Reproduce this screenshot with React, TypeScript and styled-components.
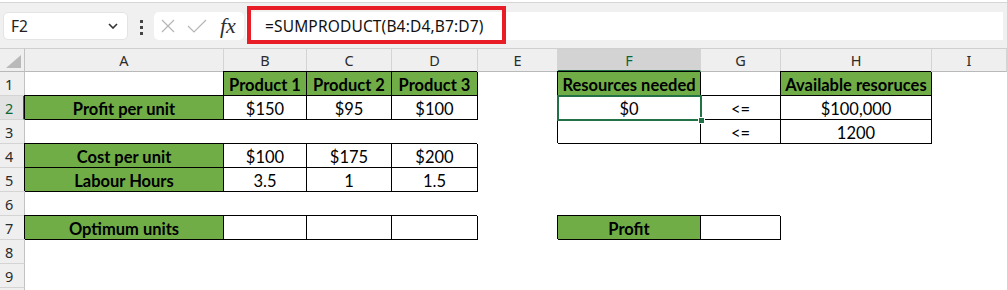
import React from 'react';
import styled, { createGlobalStyle, css } from 'styled-components';

const GlobalStyle = createGlobalStyle`
  html, body {
    margin: 0;
    padding: 0;
    background: #ffffff;
  }
  body {
    width: 1007px;
    height: 290px;
    overflow: hidden;
  }
`;

const UI_FONT = `"Noto Sans", "Open Sans", sans-serif`;
const CELL_FONT = `Lato, "Noto Sans", sans-serif`;
const GREEN_FILL = '#70ad47';
const EXCEL_GREEN = '#217346';

/**
 * Formula bar
 */
const TopStrip = styled.div`
  height: 2px;
  background: #ffffff;
  border-bottom: 1px solid #d6d6d6;
`;

const Toolbar = styled.div`
  position: relative;
  display: flex;
  align-items: flex-start;
  height: 45px;
  padding: 9px 4px 0 3px;
  box-sizing: border-box;
  background: #f0f0f0;
`;

const NameBox = styled.div`
  display: flex;
  align-items: center;
  justify-content: space-between;
  width: 125px;
  height: 28px;
  padding: 0 9px 0 7px;
  box-sizing: border-box;
  background: #ffffff;
  border: 1px solid #e4e4e4;
  border-radius: 5px;
  font-family: ${UI_FONT};
  font-size: 15.5px;
  color: #222;
`;

const Dots = styled.div`
  display: flex;
  flex-direction: column;
  gap: 3px;
  margin: 8px 11px 0 12px;

  span {
    width: 3px;
    height: 3px;
    background: #444;
  }
`;

const FxBox = styled.div`
  display: flex;
  align-items: center;
  gap: 12px;
  width: 90px;
  height: 28px;
  padding: 0 0 0 7px;
  box-sizing: border-box;
  background: #ffffff;
  border-radius: 5px;
`;

const FxLabel = styled.span`
  margin-left: 1px;
  font-family: "Liberation Serif", serif;
  font-style: italic;
  font-size: 22px;
  line-height: 1;
  color: #2e2e2e;
`;

const FormulaInput = styled.div`
  display: flex;
  align-items: center;
  flex: 1;
  height: 28px;
  margin-left: 2px;
  padding-left: 19px;
  background: #ffffff;
  border-radius: 4px 0 0 4px;
  font-family: ${UI_FONT};
  font-size: 15.5px;
  letter-spacing: 0.15px;
  color: #111;
`;

const Highlight = styled.div`
  position: absolute;
  left: 247px;
  top: 3px;
  width: 259px;
  height: 38px;
  border: 4px solid #e81d25;
  box-sizing: border-box;
  pointer-events: none;
`;

/**
 * Worksheet grid
 */
const Sheet = styled.div`
  display: grid;
  grid-template-columns: 25px 199px 83px 85px 86px 80px 143px 80px 151px 1fr;
  grid-auto-rows: 24px;
`;

const Corner = styled.div`
  position: relative;
  background: #efefef;
  border-top: 1px solid #cfcfcf;
  border-right: 1px solid #c2c2c2;
  border-bottom: 1px solid #b9b9b9;
  box-sizing: border-box;

  &::after {
    content: '';
    position: absolute;
    right: 3px;
    bottom: 3px;
    width: 0;
    height: 0;
    border-left: 15px solid transparent;
    border-bottom: 13px solid #b9b9b9;
  }
`;

const ColHeader = styled.div<{ $active?: boolean }>`
  display: flex;
  align-items: center;
  justify-content: center;
  background: ${(p) => (p.$active ? '#d3d3d3' : '#efefef')};
  border-top: 1px solid #cfcfcf;
  border-right: 1px solid #d4d4d4;
  border-bottom: ${(p) => (p.$active ? `2px solid ${EXCEL_GREEN}` : '1px solid #b9b9b9')};
  box-sizing: border-box;
  font-family: ${UI_FONT};
  font-size: 14.5px;
  color: ${(p) => (p.$active ? '#0e6537' : '#2b2b2b')};
`;

const RowHeader = styled.div<{ $active?: boolean }>`
  display: flex;
  align-items: center;
  padding-left: 5px;
  background: ${(p) => (p.$active ? '#e2e2e2' : '#efefef')};
  border-right: ${(p) => (p.$active ? `2px solid ${EXCEL_GREEN}` : '1px solid #c2c2c2')};
  border-bottom: 1px solid #d4d4d4;
  box-sizing: border-box;
  font-family: ${UI_FONT};
  font-size: 14.5px;
  color: ${(p) => (p.$active ? '#0e6537' : '#2b2b2b')};
`;

const Cell = styled.div<{ $fill?: boolean; $boxed?: boolean; $bold?: boolean; $selected?: boolean }>`
  display: flex;
  align-items: flex-end;
  justify-content: center;
  box-sizing: border-box;
  border-right: 1px solid transparent;
  border-bottom: 1px solid transparent;
  font-family: ${CELL_FONT};
  font-size: 16.5px;
  font-weight: ${(p) => (p.$bold ? 700 : 400)};
  line-height: 20px;
  color: #000;
  white-space: nowrap;
  background: ${(p) => (p.$fill ? GREEN_FILL : 'transparent')};

  ${(p) =>
    p.$boxed &&
    css`
      border-right-color: #000;
      border-bottom-color: #000;
      box-shadow: -1px -1px 0 #000;
    `}

  ${(p) =>
    p.$selected &&
    css`
      position: relative;

      &::after {
        content: '';
        position: absolute;
        left: -1px;
        top: -1px;
        right: -2px;
        bottom: -2px;
        border: 2px solid ${EXCEL_GREEN};
      }

      &::before {
        content: '';
        position: absolute;
        right: -5px;
        bottom: -5px;
        width: 5px;
        height: 5px;
        background: ${EXCEL_GREEN};
        border: 1px solid #fff;
        z-index: 1;
      }
    `}
`;

type CellSpec = {
  text?: string;
  fill?: boolean;
  boxed?: boolean;
  bold?: boolean;
  selected?: boolean;
};

const COLUMNS = ['A', 'B', 'C', 'D', 'E', 'F', 'G', 'H', 'I'];

const label = (text: string): CellSpec => ({ text, fill: true, boxed: true, bold: true });
const box = (text = ''): CellSpec => ({ text, boxed: true });
const blank: CellSpec = {};
const empty = (): CellSpec[] => COLUMNS.map(() => blank);

const ROWS: CellSpec[][] = [
  [blank, label('Product 1'), label('Product 2'), label('Product 3'), blank, label('Resources needed'), blank, label('Available resoruces'), blank],
  [label('Profit per unit'), box('$150'), box('$95'), box('$100'), blank, { text: '$0', boxed: true, selected: true }, box('<='), box('$100,000'), blank],
  [blank, blank, blank, blank, blank, box(), box('<='), box('1200'), blank],
  [label('Cost per unit'), box('$100'), box('$175'), box('$200'), blank, blank, blank, blank, blank],
  [label('Labour Hours'), box('3.5'), box('1'), box('1.5'), blank, blank, blank, blank, blank],
  empty(),
  [label('Optimum units'), box(), box(), box(), blank, label('Profit'), box(), blank, blank],
  empty(),
  empty(),
];

const App: React.FC = () => {
  return (
    <>
      <GlobalStyle />
      <TopStrip />
      <Toolbar>
        <NameBox>
          <span>F2</span>
          <svg width="10" height="6" viewBox="0 0 10 6">
            <path d="M1 1 L5 5 L9 1" fill="none" stroke="#333" strokeWidth="1.6" />
          </svg>
        </NameBox>
        <Dots>
          <span />
          <span />
          <span />
        </Dots>
        <FxBox>
          <svg width="14" height="14" viewBox="0 0 14 14">
            <path d="M1 1 L13 13 M13 1 L1 13" stroke="#b5b5b5" strokeWidth="1.2" />
          </svg>
          <svg width="20" height="14" viewBox="0 0 20 14">
            <path d="M1 7 L7 13 L19 1" fill="none" stroke="#b5b5b5" strokeWidth="1.2" />
          </svg>
          <FxLabel>fx</FxLabel>
        </FxBox>
        <FormulaInput>=SUMPRODUCT(B4:D4,B7:D7)</FormulaInput>
        <Highlight />
      </Toolbar>

      <Sheet>
        <Corner />
        {COLUMNS.map((c) => (
          <ColHeader key={c} $active={c === 'F'}>
            {c}
          </ColHeader>
        ))}
        {ROWS.map((row, r) => (
          <React.Fragment key={r}>
            <RowHeader $active={r === 1}>{r + 1}</RowHeader>
            {row.map((cell, c) => (
              <Cell
                key={c}
                $fill={cell.fill}
                $boxed={cell.boxed}
                $bold={cell.bold}
                $selected={cell.selected}
              >
                {cell.text}
              </Cell>
            ))}
          </React.Fragment>
        ))}
        {/* next row header peeks in at the bottom edge */}
        <RowHeader />
      </Sheet>
    </>
  );
};

export default App;
